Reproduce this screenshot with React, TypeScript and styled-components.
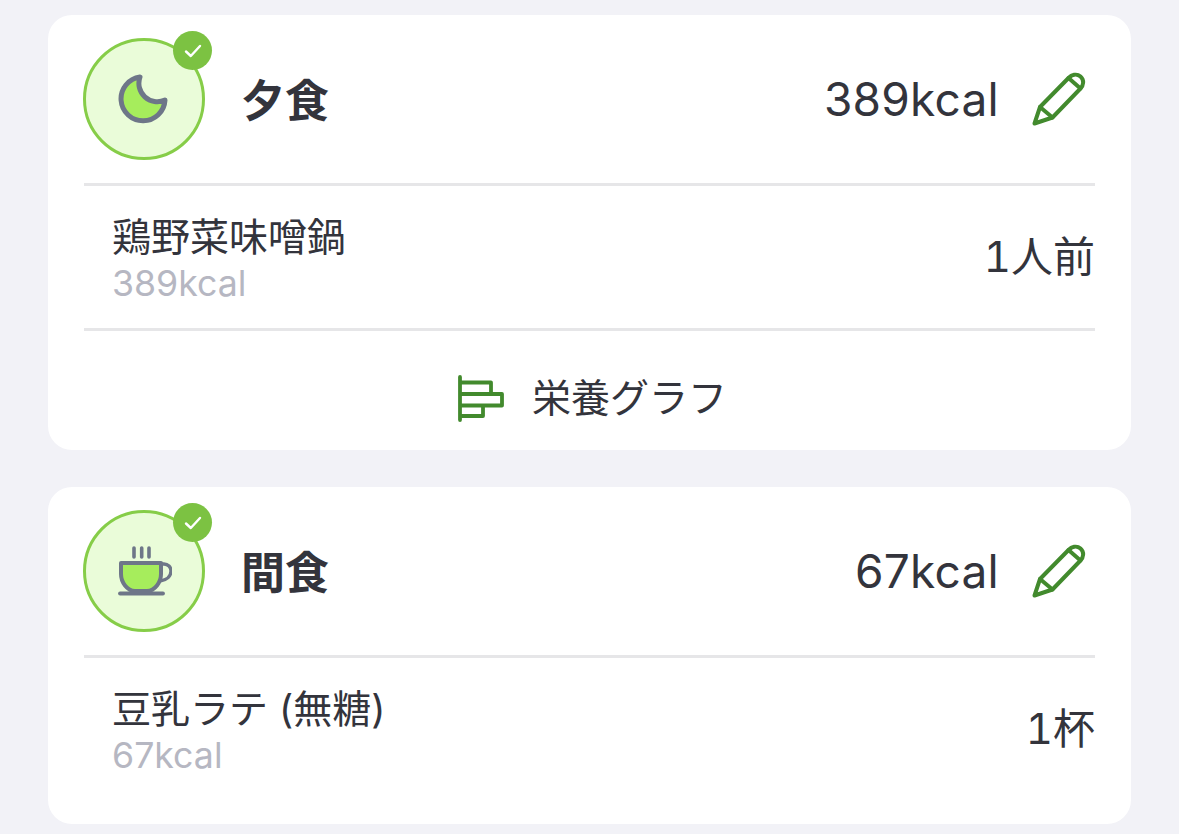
import styled, { createGlobalStyle } from 'styled-components';

const GlobalStyle = createGlobalStyle`
  html, body {
    margin: 0;
    padding: 0;
    background: #f2f2f7;
    font-family: Inter, 'Noto Sans CJK JP', sans-serif;
    overflow: hidden;
  }
`;

const meals = [
  {
    name: '夕食',
    kcal: '389kcal',
    icon: 'moon',
    item: '鶏野菜味噌鍋',
    itemKcal: '389kcal',
    amount: '1人前',
    graph: true,
  },
  {
    name: '間食',
    kcal: '67kcal',
    icon: 'cup',
    item: '豆乳ラテ (無糖)',
    itemKcal: '67kcal',
    amount: '1杯',
    graph: false,
  },
];

const MoonIcon = () => (
  <svg width='52' height='52' viewBox='0 0 52 52'>
    <path
      d='M22 4A22 22 0 1 0 47 27A18.4 18.4 0 0 1 22 4Z'
      fill='#a6ed5c'
      stroke='#6e7688'
      strokeWidth='5'
      strokeLinejoin='round'
    />
  </svg>
);

const CupIcon = () => (
  <svg width='56' height='52' viewBox='0 0 56 52'>
    <path d='M18 3v9M25.7 3v9M33 3v9' stroke='#6e7688' strokeWidth='3.6' strokeLinecap='round' fill='none' />
    <path d='M5 18H45V29C45 37 39 46 31 46H19C11 46 5 37 5 29Z' fill='#a6ed5c' stroke='#6e7688' strokeWidth='4' strokeLinejoin='round' />
    <path d='M45 19H48C52 19 55 22 55 26C55 31 51 35 44 36' fill='none' stroke='#6e7688' strokeWidth='3.4' strokeLinecap='round' />
    <path d='M4 48.5H47' stroke='#6e7688' strokeWidth='3.8' strokeLinecap='round' />
  </svg>
);

const PencilIcon = () => (
  <svg width='56' height='56' viewBox='0 0 56 56'>
    <g fill='none' stroke='#428a2d' strokeWidth='4' strokeLinejoin='round' strokeLinecap='round'>
      <path d='M8 36L36.5 7C39.5 4 44.5 2 48.5 5.5C52.5 9 51.5 14.5 48.5 17.5L20.5 46.5L2.5 52.5Z' />
      <path d='M36.5 7L48.5 17.5' />
      <path d='M8 36L20.5 46.5' />
    </g>
  </svg>
);

const GraphIcon = () => (
  <GraphSvg width='50' height='48' viewBox='0 0 50 48'>
    <g fill='none' stroke='#428a2d' strokeWidth='3.8' strokeLinejoin='round'>
      <path d='M4 2V45' strokeLinecap='round' />
      <path d='M4 7.5H35V19' />
      <path d='M4 19H46V30.5H4' />
      <path d='M27 30.5V41H4' />
    </g>
  </GraphSvg>
);

const App = () => {
  return (
    <Page>
      <GlobalStyle />
      {meals.map((meal) => (
        <Card key={meal.name}>
          <Header>
            <IconCircle>
              {meal.icon === 'moon' ? <MoonIcon /> : <CupIcon />}
              <CheckBadge>
                <svg width='18' height='14' viewBox='0 0 18 14'>
                  <path d='M2 7.5L6.8 12L16 2' fill='none' stroke='#fff' strokeWidth='2.4' strokeLinecap='round' strokeLinejoin='round' />
                </svg>
              </CheckBadge>
            </IconCircle>
            <MealName>{meal.name}</MealName>
            <MealKcal>{meal.kcal}</MealKcal>
            <EditButton>
              <PencilIcon />
            </EditButton>
          </Header>
          <ItemRow $last={!meal.graph}>
            <ItemText>
              <ItemName>{meal.item}</ItemName>
              <ItemKcal>{meal.itemKcal}</ItemKcal>
            </ItemText>
            <Amount>{meal.amount}</Amount>
          </ItemRow>
          {meal.graph && (
            <GraphRow>
              <GraphIcon />
              <GraphLabel>栄養グラフ</GraphLabel>
            </GraphRow>
          )}
        </Card>
      ))}
    </Page>
  );
};

export default App;

const Page = styled.div`
  width: 1179px;
  height: 834px;
  box-sizing: border-box;
  padding: 15px 48px 0;
  display: flex;
  flex-direction: column;
  gap: 37px;
  background: #f2f2f7;
  color: #33343c;
`;

const Card = styled.section`
  background: #ffffff;
  border-radius: 24px;
  padding: 0 36px;
  flex-shrink: 0;
`;

const Header = styled.div`
  height: 171px;
  box-sizing: border-box;
  display: flex;
  align-items: center;
  border-bottom: 3px solid #e6e6e8;
`;

const IconCircle = styled.div`
  position: relative;
  width: 122px;
  height: 122px;
  margin-left: -1px;
  box-sizing: border-box;
  border: 3.5px solid #86cd48;
  border-radius: 50%;
  background: #eafcd9;
  display: flex;
  align-items: center;
  justify-content: center;
  flex-shrink: 0;
`;

const CheckBadge = styled.div`
  position: absolute;
  top: -10px;
  right: -10px;
  width: 39px;
  height: 39px;
  border-radius: 50%;
  background: #7cc242;
  display: flex;
  align-items: center;
  justify-content: center;
`;

const MealName = styled.div`
  margin-left: 36px;
  margin-bottom: 3px;
  font-size: 44px;
  font-weight: 700;
  flex: 1;
`;

const MealKcal = styled.div`
  font-size: 46px;
  font-weight: 400;
  letter-spacing: 0.25px;
`;

const EditButton = styled.div`
  width: 56px;
  height: 56px;
  margin: 0 7px 0 33px;
  display: flex;
`;

const ItemRow = styled.div<{ $last: boolean }>`
  height: ${(p) => (p.$last ? '166px' : '145px')};
  box-sizing: border-box;
  padding: 26px 0 0 28px;
  display: flex;
  justify-content: space-between;
  align-items: flex-start;
  border-bottom: ${(p) => (p.$last ? 'none' : '3px solid #e6e6e8')};
`;

const ItemText = styled.div`
  display: flex;
  flex-direction: column;
`;

const ItemName = styled.div`
  font-size: 39px;
  line-height: 50px;
`;

const ItemKcal = styled.div`
  font-size: 35.7px;
  line-height: 42px;
  color: #b6b7c2;
`;

const Amount = styled.div`
  font-size: 42px;
  line-height: 50px;
  margin-top: 20px;
  font-variant-numeric: tabular-nums;
`;

const GraphRow = styled.div`
  height: 119px;
  display: flex;
  align-items: center;
  justify-content: center;
  gap: 26px;
  padding: 8px 0 0 4px;
  box-sizing: border-box;
`;

const GraphSvg = styled.svg`
  margin-top: 8px;
`;

const GraphLabel = styled.div`
  font-size: 39px;
`;
